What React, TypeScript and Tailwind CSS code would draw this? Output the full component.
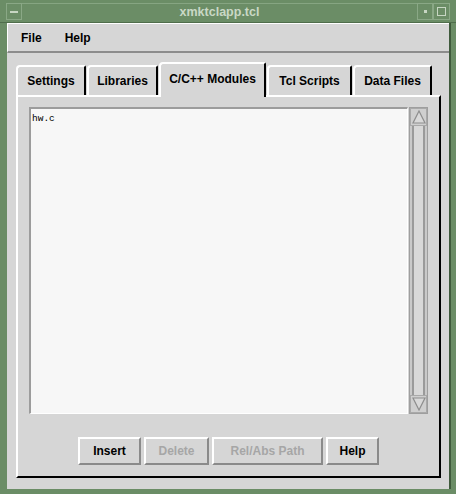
import React from 'react';

const tabs = ['Settings', 'Libraries', 'C/C++ Modules', 'Tcl Scripts', 'Data Files'];
const tabWidths = ['w-[70px]', 'w-[71px]', 'w-[107px]', 'w-[85px]', 'w-[79px]'];

const Arrow: React.FC<{ up?: boolean }> = ({ up }) => (
  <div className="h-[18px] flex items-center justify-center border border-[#a9a9a9] bg-[#cfcfcf]">
    <svg width="14" height="14" viewBox="0 0 14 14">
      {up ? (
        <polygon points="7,1 13,13 1,13" fill="#d9d9d9" stroke="#8e8e8e" strokeWidth="1.2" />
      ) : (
        <polygon points="1,1 13,1 7,13" fill="#d9d9d9" stroke="#8e8e8e" strokeWidth="1.2" />
      )}
    </svg>
  </div>
);

const Btn: React.FC<{ label: string; w: string; disabled?: boolean }> = ({ label, w, disabled }) => (
  <button
    className={`${w} h-[28px] border-2 border-t-white border-l-white border-b-[#8a8a8a] border-r-[#8a8a8a] bg-[#d6d6d6] text-[12px] font-bold ${disabled ? 'text-[#a6a6a6]' : 'text-black'}`}
  >
    {label}
  </button>
);

export default function App() {
  const [active, setActive] = React.useState(2);

  return (
    <div
      className="w-[456px] h-[494px] bg-[#6b8d66] flex flex-col overflow-hidden"
      style={{ fontFamily: '"Liberation Sans", Arial, sans-serif' }}
    >
      {/* Title bar */}
      <div className="h-[23px] shrink-0 flex items-stretch border-b border-[#4f6d4b] pt-[3px]">
        <div className="w-[6px]" />
        <div className="w-[16px] border border-[#8aa886] flex items-center justify-center mb-[2px]">
          <div className="w-[8px] h-[2px] bg-[#c7d6c3]" />
        </div>
        <div className="flex-1 flex items-center justify-center text-[12.5px] font-bold text-[#c9d8c5] border-t border-[#86a582] mb-[2px]">
          xmktclapp.tcl
        </div>
        <div className="w-[16px] border border-[#8aa886] flex items-center justify-center mb-[2px]">
          <div className="w-[3px] h-[3px] bg-[#c7d6c3]" />
        </div>
        <div className="w-[17px] border border-[#8aa886] flex items-center justify-center mb-[2px]">
          <div className="w-[9px] h-[9px] border border-[#c7d6c3]" />
        </div>
        <div className="w-[6px]" />
      </div>

      {/* Client */}
      <div className="ml-[7px] w-[442px] h-[466px] shrink-0 bg-[#d6d6d6] flex flex-col shadow-[2px_0_0_#3f5a3c]">
        {/* Menubar */}
        <div className="h-[30px] shrink-0 flex items-center gap-[23px] pl-[13px] border-t border-l border-white border-b-2 border-b-[#8c8c8c] text-[12px] font-bold text-black">
          <span>File</span>
          <span>Help</span>
        </div>

        {/* Notebook */}
        <div className="flex flex-col pl-[9px] pr-[8px] pt-[9px]">
          <div className="h-[33px] flex items-end gap-[1px] relative z-10">
            {tabs.map((t, i) => (
              <div
                key={t}
                onClick={() => setActive(i)}
                className={`${tabWidths[i]} ${
                  i === active ? 'h-[35px] -mb-[2px] pb-[4px]' : 'h-[30px]'
                } flex items-center justify-center bg-[#d6d6d6] border-t-2 border-l-2 border-t-white border-l-white border-r-2 border-r-black rounded-tl-[4px] rounded-tr-[2px] text-[12px] font-bold text-black cursor-default`}
              >
                {t}
              </div>
            ))}
          </div>

          <div className="flex flex-col border-t-2 border-l-2 border-t-white border-l-white border-r-2 border-b-2 border-r-black border-b-black pl-[11px] pr-[11px] pt-[10px] pb-[11px]">
            <div className="h-[307px] flex">
              <div
                className="flex-1 border-t-2 border-l-2 border-t-[#9c9c9c] border-l-[#9c9c9c] border-b border-r border-b-white border-r-white bg-[#f7f7f7] pl-[1px] pt-[4px] text-[9.5px] leading-[11px] text-black"
                style={{ fontFamily: '"Liberation Mono", "DejaVu Sans Mono", monospace' }}
              >
                hw.c
              </div>
              <div className="w-[19px] ml-[1px] flex flex-col border border-[#9e9e9e] bg-[#c9c9c9]">
                <Arrow up />
                <div className="flex-1 mx-[2px] border-l-2 border-r-2 border-[#9a9a9a] bg-[#d8d8d8]" />
                <Arrow />
              </div>
            </div>

            <div className="mt-[23px] flex justify-center gap-[3px]">
              <Btn label="Insert" w="w-[63px]" />
              <Btn label="Delete" w="w-[65px]" disabled />
              <Btn label="Rel/Abs Path" w="w-[111px]" disabled />
              <Btn label="Help" w="w-[53px]" />
            </div>
          </div>
        </div>
      </div>
    </div>
  );
}
